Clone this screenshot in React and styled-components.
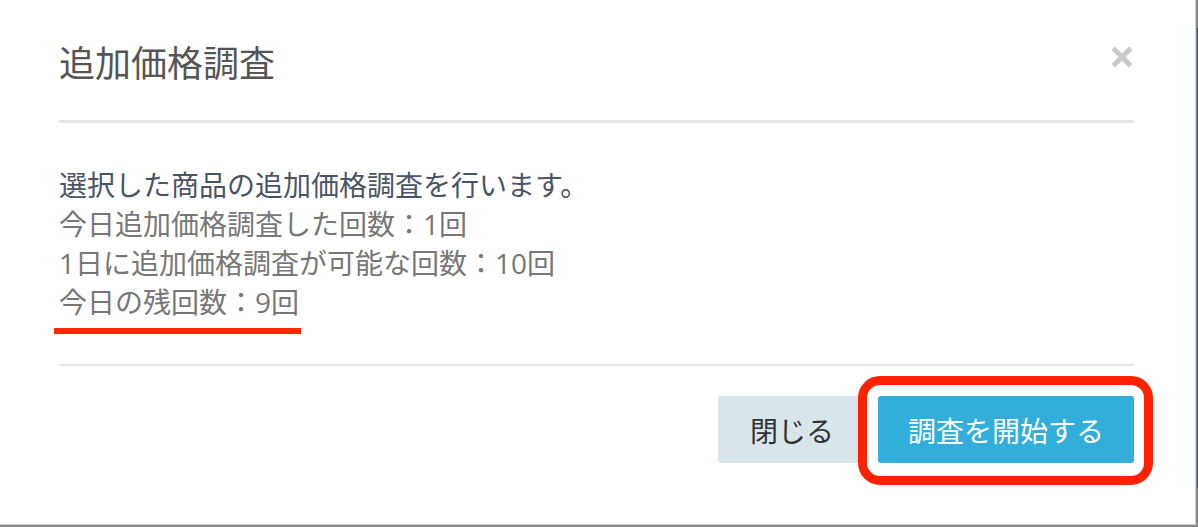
import React from "react";
import styled, { createGlobalStyle } from "styled-components";

const GlobalStyle = createGlobalStyle`
  html, body {
    margin: 0;
    padding: 0;
    background: #8a8a8a;
  }
  body {
    font-family: "Open Sans", "Noto Sans CJK JP", sans-serif;
  }
`;

const Page = styled.div`
  width: 1198px;
  height: 527px;
  overflow: hidden;
  display: flex;
  background: #8a8a8a;
`;

const Backdrop = styled.div`
  width: 2px;
  margin-top: 28px;
  height: 460px;
  background: linear-gradient(to right, #8a8a8a 0, #8a8a8a 1px, #1f5f6b 1px);
`;

const Modal = styled.div`
  flex: none;
  box-sizing: border-box;
  width: 1196px;
  height: 525px;
  padding: 0 61px 0 59px;
  background: #fff;
  border-right: 1px solid #d0d0d0;
  border-bottom: 1px solid #d0d0d0;
  display: flex;
  flex-direction: column;
`;

const Header = styled.div`
  display: flex;
  justify-content: space-between;
  align-items: flex-start;
  padding-top: 40px;
  height: 80px;
  border-bottom: 3px solid #e5e5e5;
`;

const Title = styled.h1`
  margin: 0;
  font-size: 36px;
  line-height: 48px;
  font-weight: 400;
  color: #555;
`;

const CloseX = styled.button`
  border: 0;
  background: none;
  padding: 0;
  margin: 7px 2px 0 0;
  width: 20px;
  height: 20px;
  cursor: pointer;
  display: flex;
`;

const Body = styled.div`
  padding: 43px 0 0;
  height: 198px;
  border-bottom: 2px solid #e5e5e5;
`;

const Line = styled.p`
  margin: 0;
  font-size: 28px;
  line-height: 39px;
  color: ${(p) => (p.$lead ? "#4a5466" : "#777")};
`;

const Marked = styled.span`
  position: relative;
  &::after {
    content: "";
    position: absolute;
    left: -5px;
    right: -2px;
    bottom: -13px;
    height: 6px;
    background: #ff2a00;
  }
`;

const Footer = styled.div`
  display: flex;
  justify-content: flex-end;
  align-items: center;
  gap: 12px;
  padding-top: 30px;
`;

const Button = styled.button`
  height: 67px;
  padding: 0 ${(p) => (p.$primary ? "30px" : "32px")};
  border: 0;
  border-radius: 3px;
  font-family: inherit;
  font-size: 28px;
  background: ${(p) => (p.$primary ? "#31aed9" : "#d8e5eb")};
  color: ${(p) => (p.$primary ? "#fff" : "#333")};
  cursor: pointer;
  position: relative;
`;

const Highlight = styled.span`
  position: absolute;
  left: -20px;
  right: -19px;
  top: -20px;
  bottom: -22px;
  border: 9px solid #ff2200;
  border-radius: 22px;
  pointer-events: none;
`;

export default function App() {
  return (
    <Page>
      <GlobalStyle />
      <Modal>
        <Header>
          <Title>追加価格調査</Title>
          <CloseX aria-label="close">
            <svg width="20" height="20" viewBox="0 0 20 20">
              <path
                d="M3 3 L17 17 M17 3 L3 17"
                stroke="#c9c9c9"
                strokeWidth="5"
                strokeLinecap="square"
              />
            </svg>
          </CloseX>
        </Header>
        <Body>
          <Line $lead>選択した商品の追加価格調査を行います。</Line>
          <Line>今日追加価格調査した回数：1回</Line>
          <Line>1日に追加価格調査が可能な回数：10回</Line>
          <Line>
            <Marked>今日の残回数：9回</Marked>
          </Line>
        </Body>
        <Footer>
          <Button>閉じる</Button>
          <Button $primary>
            調査を開始する
            <Highlight />
          </Button>
        </Footer>
      </Modal>
      <Backdrop />
    </Page>
  );
}
